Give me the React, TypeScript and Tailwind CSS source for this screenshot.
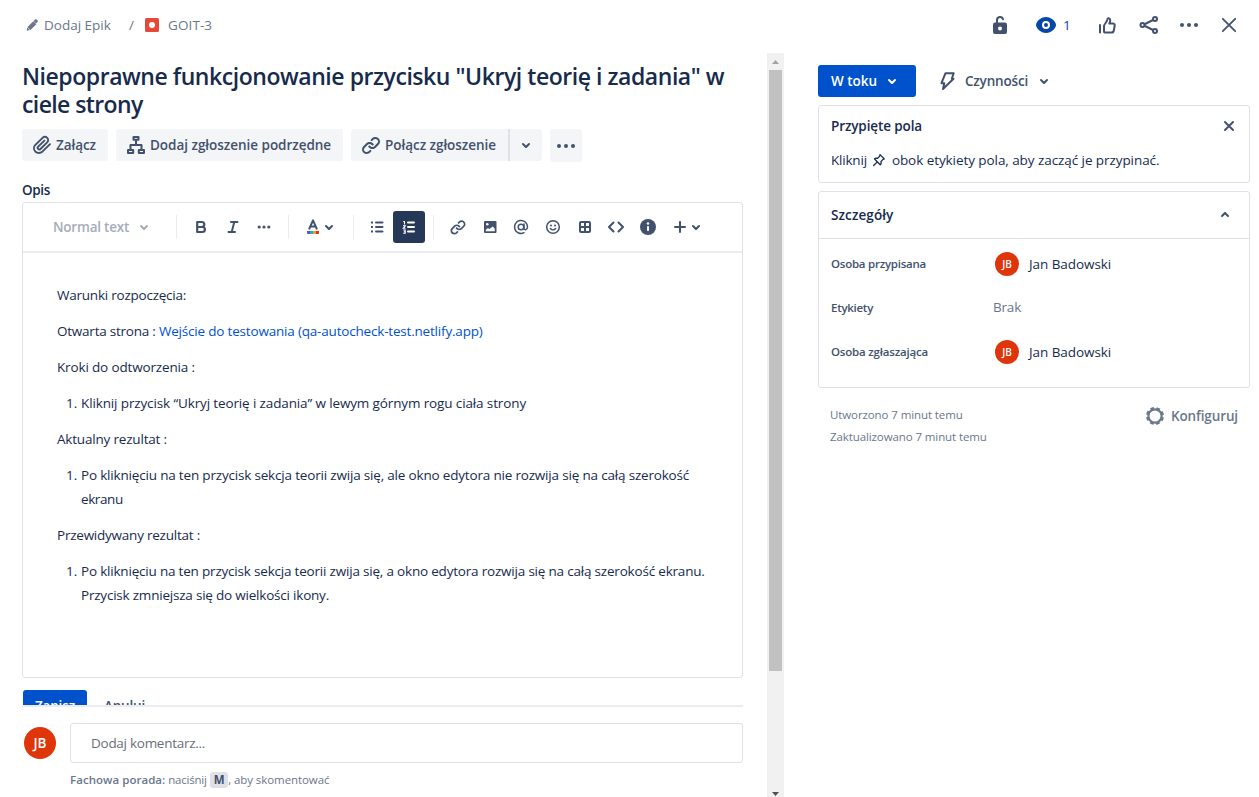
import type { ReactNode } from "react";

function Svg({ children, className = "size-6" }: { children: ReactNode; className?: string }) {
  return (
    <svg viewBox="0 0 24 24" className={`shrink-0 ${className}`} fill="none" stroke="none">
      {children}
    </svg>
  );
}

function Chevron({ className = "size-6" }: { className?: string }) {
  return (
    <Svg className={className}>
      <path
        fill="currentColor"
        d="M8.292 10.293a1.009 1.009 0 000 1.419l2.939 2.965c.218.215.5.322.779.322s.556-.107.769-.322l2.93-2.955a1.01 1.01 0 000-1.419.987.987 0 00-1.406 0l-2.298 2.317-2.307-2.327a.99.99 0 00-1.406 0z"
      />
    </Svg>
  );
}

function LinkIcon({ className }: { className?: string }) {
  return (
    <Svg className={className}>
      <g fill="currentColor">
        <path d="M12.856 5.457l-.937.92a1.002 1.002 0 000 1.437 1.047 1.047 0 001.463 0l.984-.966c.967-.95 2.542-1.135 3.602-.288a2.54 2.54 0 01.203 3.81l-2.903 2.852a2.646 2.646 0 01-3.696 0l-1.11-1.09L9 13.57l1.108 1.089c1.822 1.788 4.802 1.788 6.622 0l2.905-2.852a4.558 4.558 0 00-.357-6.82c-1.893-1.517-4.695-1.226-6.422.47" />
        <path d="M11.144 19.543l.937-.92a1.002 1.002 0 000-1.437 1.047 1.047 0 00-1.462 0l-.985.966c-.967.95-2.542 1.135-3.602.288a2.54 2.54 0 01-.203-3.81l2.903-2.852a2.646 2.646 0 013.696 0l1.11 1.09L15 11.43l-1.108-1.089c-1.822-1.788-4.802-1.788-6.622 0l-2.905 2.852a4.558 4.558 0 00.357 6.82c1.893 1.517 4.695 1.226 6.422-.47" />
      </g>
    </Svg>
  );
}

function AttachIcon() {
  return (
    <Svg>
      <path
        fill="currentColor"
        d="M11.643 17.965c-1.53 1.495-4.016 1.496-5.542.004a3.773 3.773 0 01.002-5.412l7.147-6.985a2.316 2.316 0 013.233-.003c.893.873.895 2.282.004 3.153l-6.703 6.55a.653.653 0 01-.914-.008.62.62 0 010-.902l6.229-6.087a.941.941 0 000-1.353.995.995 0 00-1.384 0l-6.23 6.087a2.502 2.502 0 000 3.607 2.643 2.643 0 003.683.009l6.703-6.55a4.074 4.074 0 00-.003-5.859 4.306 4.306 0 00-6.001.003L4.72 11.204a5.648 5.648 0 00-.002 8.118c2.293 2.24 6.017 2.241 8.308-.001l7.687-7.502a.94.94 0 000-1.353.995.995 0 00-1.384 0z"
      />
    </Svg>
  );
}

function ChildIssueIcon() {
  return (
    <Svg>
      <g stroke="currentColor" strokeWidth="2" strokeLinejoin="round" strokeLinecap="round">
        <rect x="10.500" y="4" width="5" height="2.800" />
        <path d="M13 7.500V12M7.500 16v-4h11v4" />
        <rect x="5" y="17" width="5.200" height="3" />
        <rect x="15.800" y="17" width="5.200" height="3" />
      </g>
    </Svg>
  );
}

function MoreIcon({ className }: { className?: string }) {
  return (
    <Svg className={className}>
      <g fill="currentColor">
        <circle cx="5" cy="12" r="2" />
        <circle cx="12" cy="12" r="2" />
        <circle cx="19" cy="12" r="2" />
      </g>
    </Svg>
  );
}

function Divider({ className }: { className: string }) {
  return <span className={`h-6 w-px shrink-0 bg-[#ebecf0] ${className}`} />;
}

function Avatar({ className }: { className: string }) {
  return (
    <span className={`flex shrink-0 items-center justify-center rounded-full bg-[#de350b] font-semibold text-white ${className}`}>
      JB
    </span>
  );
}

function TopBar() {
  return (
    <header className="flex h-[53px] shrink-0 items-start pl-6 pr-[18px] pt-[13px] text-[#6b778c]">
      <div className="flex h-6 items-center">
        <svg viewBox="0 0 16 16" className="size-4" fill="currentColor">
          <path d="M2.700 13.600l.6-3.100 2.600 2.600-2.900.7c-.2 0-.4-.1-.3-.2zM3.500 10l5.800-5.800 3 3L6.500 13zM9.600 4l1.500-1.500c.5-.5 1.200-.4 1.700 0l.7.7c.5.500.4 1.200 0 1.700L12 6.500z" />
        </svg>
        <span className="ml-1 w-[85px]">Dodaj Epik</span>
        <span className="w-4">/</span>
        <svg viewBox="0 0 14 14" className="size-[14px]">
          <rect width="14" height="14" rx="1.5" fill="#e5493a" />
          <circle cx="7" cy="7" r="3" fill="#fff" />
        </svg>
        <span className="ml-[9px] tracking-[0.1px]">GOIT-3</span>
      </div>
      <div className="ml-auto flex h-6 items-center text-[#42526e]">
        <Svg>
          <path d="M9 10.500V7a3.050 3.050 0 016-.8" stroke="currentColor" strokeWidth="2" strokeLinecap="round" />
          <rect x="5" y="9.500" width="14" height="11.500" rx="2" fill="currentColor" />
          <circle cx="12" cy="15.5" r="2" fill="#fff" />
        </Svg>
        <Svg className="ml-[22px] size-6 text-[#0747a6]">
          <path fill="currentColor" d="M12 4c-5.400 0-10 4.800-10 8s4.600 8 10 8 10-4.800 10-8-4.600-8-10-8z" />
          <circle cx="12" cy="12" r="3" stroke="#fff" strokeWidth="2" />
        </Svg>
        <span className="ml-[5px] w-[9px] text-[#0747a6]">1</span>
        <Svg className="-mt-[2px] ml-[23px] size-6">
          <path
            d="M5 13v7.500M9 19.500V14c0-1.800 3-3.800 3.300-6.300.2-2.200 2.900-1.900 2.900.5 0 1.600-.9 3.300-.9 3.300h3.600c1.300 0 2 .8 1.800 2l-.9 5c-.2 1.300-1 2-2.300 2h-5.700c-1.100 0-1.800-.4-1.800-1z"
            stroke="currentColor"
            strokeWidth="2"
            strokeLinejoin="round"
            strokeLinecap="round"
          />
        </Svg>
        <Svg className="ml-[18px] size-6">
          <path d="M6 12l12-6M6 12l12 6" stroke="currentColor" strokeWidth="2" />
          <g stroke="currentColor" strokeWidth="2" fill="#fff">
            <circle cx="5.500" cy="12" r="2" />
            <circle cx="18" cy="6" r="2" />
            <circle cx="18" cy="18" r="2" />
          </g>
        </Svg>
        <MoreIcon className="ml-4 size-6" />
        <Svg className="ml-4 size-6">
          <path d="M5.800 5.800l12.400 12.400M18.200 5.800l-12.400 12.400" stroke="currentColor" strokeWidth="1.800" strokeLinecap="round" />
        </Svg>
      </div>
    </header>
  );
}

const pill = "flex h-8 items-center rounded-[3px] bg-[#f4f5f7] font-semibold text-[#42526e]";

function ActionBar() {
  return (
    <div className="mt-[11px] flex gap-2">
      <button className={`${pill} w-[86px] pl-2 tracking-[-0.07px]`}>
        <AttachIcon />
        <span className="ml-0.5">Załącz</span>
      </button>
      <button className={`${pill} w-[227px] pl-[7px] tracking-[-0.03px]`}>
        <ChildIssueIcon />
        <span className="ml-[3px]">Dodaj zgłoszenie podrzędne</span>
      </button>
      <div className="flex">
        <button className={`${pill} w-[157px] rounded-r-none pl-2 tracking-[-0.04px]`}>
          <LinkIcon />
          <span className="ml-0.5">Połącz zgłoszenie</span>
        </button>
        <span className="h-8 w-[2px] bg-[#dfe1e6]" />
        <button className={`${pill} w-8 justify-center rounded-l-none`}>
          <Chevron />
        </button>
      </div>
      <button className={`${pill} h-[33px] w-8 justify-center`}>
        <MoreIcon />
      </button>
    </div>
  );
}

function Toolbar() {
  return (
    <div className="flex h-[50px] shrink-0 items-center border-b-2 border-[#ebecf0] text-[#42526e]">
      <span className="ml-[30px] w-[79px] font-semibold tracking-[-0.22px] text-[#a5adba]">Normal text</span>
      <Chevron className="size-6 text-[#a5adba]" />
      <Divider className="ml-5" />
      <Svg className="ml-3 size-6">
        <path
          d="M8.200 7h4.600a2.500 2.500 0 010 5H8.200zM8.200 12h5.200a2.500 2.500 0 010 5H8.200z"
          stroke="currentColor"
          strokeWidth="2.200"
          strokeLinejoin="round"
        />
      </Svg>
      <Svg className="ml-2 size-6">
        <path d="M10 7h6.500M7.500 17H14M13.300 7l-2.600 10" stroke="currentColor" strokeWidth="2" strokeLinecap="round" />
      </Svg>
      <Svg className="ml-[7px] size-6">
        <g fill="currentColor">
          <circle cx="7.200" cy="12" r="1.600" />
          <circle cx="12" cy="12" r="1.600" />
          <circle cx="16.800" cy="12" r="1.600" />
        </g>
      </Svg>
      <Divider className="ml-3" />
      <Svg className="ml-3 size-6">
        <path d="M8 14.300l4-9 4 9M9.500 11.500h5" stroke="currentColor" strokeWidth="2" strokeLinejoin="round" />
        <path d="M6 16h3v3H7a1 1 0 01-1-1z" fill="#6554c0" />
        <path d="M9 16h3v3H9z" fill="#00b8d9" />
        <path d="M12 16h3v3h-3z" fill="#ff991f" />
        <path d="M15 16h3v2a1 1 0 01-1 1h-2z" fill="#de350b" />
      </Svg>
      <Chevron className="-ml-2 size-6" />
      <Divider className="ml-3" />
      <Svg className="ml-[11px] size-6">
        <path d="M11 7.500h6.500M11 12h6.500M11 16.500h6.500" stroke="currentColor" strokeWidth="2" strokeLinecap="round" />
        <path d="M6 7.500h2M6 12h2M6 16.500h2" stroke="currentColor" strokeWidth="2" />
      </Svg>
      <span className="ml-1 flex size-8 items-center justify-center rounded-[3px] bg-[#253858] text-white">
        <Svg>
          <path d="M11 7.500h6M11 12h6M11 16.500h6" stroke="currentColor" strokeWidth="2" strokeLinecap="round" />
          <path
            d="M6.200 6.500h1.300v3M6 10.800h2.300L6.300 13.300h2.200M6.200 15h2v3.300H6.200M6.800 16.700h1.400"
            stroke="currentColor"
            strokeWidth="1.100"
          />
        </Svg>
      </span>
      <Divider className="ml-2" />
      <LinkIcon className="ml-3 size-6 p-[2px]" />
      <Svg className="ml-2 size-6">
        <rect x="6" y="6" width="12.500" height="12" rx="1" fill="currentColor" />
        <circle cx="9.300" cy="9.300" r="1.300" fill="#fff" />
        <path d="M7.800 16.300v-1.600l2-1.600 1.700 1 3.200-2.700 2 2v2.900z" fill="#fff" />
      </Svg>
      <Svg className="ml-[7px] size-6">
        <g stroke="currentColor" strokeWidth="1.500" strokeLinecap="round">
          <circle cx="12" cy="12" r="2.800" />
          <path d="M15 9v4.300c0 2.200 3.500 2 3.500-1.300a6.500 6.500 0 10-3.500 5.700" />
        </g>
      </Svg>
      <Svg className="ml-2 size-6">
        <circle cx="12" cy="12" r="6.300" stroke="currentColor" strokeWidth="1.500" />
        <circle cx="10" cy="10.500" r="1" fill="currentColor" />
        <circle cx="14" cy="10.500" r="1" fill="currentColor" />
        <path d="M9.300 13.400c1.200 2 4.200 2 5.400 0" stroke="currentColor" strokeWidth="1.400" strokeLinecap="round" />
      </Svg>
      <Svg className="ml-2 size-6">
        <rect x="7" y="7" width="10" height="10" rx="1" stroke="currentColor" strokeWidth="2" />
        <path d="M12 7v10M7 12h10" stroke="currentColor" strokeWidth="2" />
      </Svg>
      <Svg className="ml-[7px] size-6">
        <path
          d="M9.500 7.500L5 12l4.500 4.500M14.500 7.500L19 12l-4.500 4.500"
          stroke="currentColor"
          strokeWidth="2"
          strokeLinecap="round"
          strokeLinejoin="round"
        />
      </Svg>
      <Svg className="ml-2 size-6">
        <circle cx="12" cy="12" r="8" fill="currentColor" />
        <rect x="11" y="11" width="2" height="5" rx="0.800" fill="#fff" />
        <circle cx="12" cy="8.500" r="1.200" fill="#fff" />
      </Svg>
      <Svg className="ml-2 size-6">
        <path d="M12 7v10M7 12h10" stroke="currentColor" strokeWidth="2" strokeLinecap="round" />
      </Svg>
      <Chevron className="-ml-2 size-6" />
    </div>
  );
}

function Numbered({ children }: { children: ReactNode }) {
  return (
    <ol className="mb-3 flex leading-6">
      <li className="w-6 pr-1 text-right">1.</li>
      <li>{children}</li>
    </ol>
  );
}

function Editor() {
  return (
    <div className="mt-[2px] flex h-[476px] w-[721px] shrink-0 flex-col rounded-[3px] border border-[#dfe1e6]">
      <Toolbar />
      <div className="whitespace-nowrap pl-[34px] pt-[30px] tracking-[-0.19px]">
        <p className="mb-3 leading-6 tracking-[-0.23px]">Warunki rozpoczęcia:</p>
        <p className="mb-3 leading-6">
          <span className="tracking-[-0.23px]">Otwarta strona : </span>
          <a className="text-[#0052cc]">Wejście do testowania (qa-autocheck-test.netlify.app)</a>
        </p>
        <p className="mb-3 leading-6 tracking-[-0.15px]">Kroki do odtworzenia :</p>
        <Numbered>
          <span className="tracking-[-0.128px]">
            Kliknij przycisk “Ukryj teorię i zadania” w lewym górnym rogu ciała strony
          </span>
        </Numbered>
        <p className="mb-3 leading-6">Aktualny rezultat :</p>
        <Numbered>
          <span className="tracking-[-0.182px]">
            Po kliknięciu na ten przycisk sekcja teorii zwija się, ale okno edytora nie rozwija się na całą szerokość
          </span>
          <br />
          <span className="tracking-[-0.4px]">ekranu</span>
        </Numbered>
        <p className="mb-3 leading-6 tracking-[-0.23px]">Przewidywany rezultat :</p>
        <Numbered>
          <span className="tracking-[-0.197px]">
            Po kliknięciu na ten przycisk sekcja teorii zwija się, a okno edytora rozwija się na całą szerokość ekranu.
          </span>
          <br />
          <span className="tracking-[-0.21px]">Przycisk zmniejsza się do wielkości ikony.</span>
        </Numbered>
      </div>
    </div>
  );
}

function CommentBox() {
  return (
    <div className="mr-6 flex border-t-2 border-[#ebecf0] pt-4">
      <Avatar className="ml-[2px] mt-1 size-8 text-[13.5px]" />
      <div className="ml-[14px] flex-1">
        <div className="flex h-10 items-center rounded-[3px] border border-[#dfe1e6] pl-5 tracking-[-0.27px] text-[#6b6e76]">
          Dodaj komentarz...
        </div>
        <div className="mt-2 flex h-[18px] items-center whitespace-pre text-[11.5px] text-[#6b778c]">
          <b className="font-semibold tracking-[0.04px]">Fachowa porada:</b>
          <span className="ml-[3px] tracking-[-0.22px]">naciśnij</span>
          <kbd className="ml-[3.5px] mr-px flex h-4 w-[18px] items-center justify-center rounded-[3px] bg-[#dfe1e6] font-['Open_Sans'] font-bold text-[#42526e]">
            M
          </kbd>
          <span className="-ml-px tracking-[-0.08px]">, aby skomentować</span>
        </div>
      </div>
    </div>
  );
}

function Scrollbar() {
  return (
    <div className="flex w-[17px] shrink-0 flex-col items-center bg-[#f1f1f1]">
      <svg viewBox="0 0 17 17" className="size-[17px]">
        <path d="M5 11h7L8.500 7z" fill="#a3a3a3" />
      </svg>
      <div className="h-[601px] w-[13px] bg-[#c1c1c1]" />
      <svg viewBox="0 0 17 12" className="mt-auto h-3 w-[17px]">
        <path d="M5 7h7L8.500 11z" fill="#505050" />
      </svg>
    </div>
  );
}

function Field({ label, track, children }: { label: string; track: string; children: ReactNode }) {
  return (
    <div className="flex h-11 items-center">
      <span className={`w-[163px] text-[11.5px] font-semibold text-[#42526e] ${track}`}>{label}</span>
      {children}
    </div>
  );
}

function Person() {
  return (
    <span className="flex items-center pl-px text-[#172b4d]">
      <Avatar className="size-6 text-[10px]" />
      <span className="ml-2.5 tracking-[-0.06px]">Jan Badowski</span>
    </span>
  );
}

function Details() {
  return (
    <aside className="ml-[34px] w-[432px] shrink-0 pt-3">
      <div className="flex items-center font-semibold">
        <button className="flex h-8 w-[98px] items-center rounded-[3px] bg-[#0052cc] pl-3 text-white">
          <span className="-ml-[2px] w-[52px]">W toku</span>
          <Chevron />
        </button>
        <button className="ml-[19px] flex items-center text-[#42526e]">
          <Svg>
            <path
              d="M10.500 4.200h8.200l-1.900 5.600h1.700L8 20l1.300-5.800H6.500z"
              stroke="currentColor"
              strokeWidth="2"
              strokeLinejoin="round"
            />
          </Svg>
          <span className="ml-[2px] w-[71px] tracking-[-0.18px]">Czynności</span>
          <Chevron />
        </button>
      </div>

      <section className="mt-2 h-[78px] rounded-[3px] border border-[#dfe1e6] px-3 pt-2 text-[#172b4d]">
        <div className="flex h-6 items-center justify-between">
          <h2 className="font-semibold tracking-[-0.11px]">Przypięte pola</h2>
          <Svg className="-mr-1 size-6 text-[#42526e]">
            <path d="M8 8l8 8M16 8l-8 8" stroke="currentColor" strokeWidth="2" strokeLinecap="round" />
          </Svg>
        </div>
        <p className="mt-2.5 flex h-6 items-center">
          <span className="tracking-[-0.2px]">Kliknij</span>
          <Svg className="ml-1 size-4">
            <path
              d="M13.500 4l6.500 6.500-2 .5-3 3.200.2 3.500-1.400 1.400-8.500-8.500 1.400-1.400 3.300.2 3-3.200zM9.500 14.800L4 20.300"
              stroke="currentColor"
              strokeWidth="1.900"
              strokeLinejoin="round"
              strokeLinecap="round"
            />
          </Svg>
          <span className="ml-[5px] tracking-[-0.07px]">obok etykiety pola, aby zacząć je przypinać.</span>
        </p>
      </section>

      <section className="mt-2 h-[197px] rounded-[3px] border border-[#dfe1e6]">
        <div className="flex h-[47px] items-center justify-between border-b border-[#dfe1e6] pl-3 pr-3 text-[#172b4d]">
          <h2 className="font-semibold tracking-[0.1px]">Szczegóły</h2>
          <Chevron className="size-6 rotate-180 text-[#42526e]" />
        </div>
        <div className="pl-3 pt-[3px]">
          <Field label="Osoba przypisana" track="tracking-[-0.24px]">
            <Person />
          </Field>
          <Field label="Etykiety" track="tracking-[-0.28px]">
            <span className="-mt-[2px] -ml-px tracking-[-0.2px] text-[#6b778c]">Brak</span>
          </Field>
          <Field label="Osoba zgłaszająca" track="tracking-[-0.2px]">
            <Person />
          </Field>
        </div>
      </section>

      <div className="mt-4 flex justify-between pl-3 pr-3 text-[#6b778c]">
        <div className="text-[11.5px] leading-[22px] tracking-[-0.1px]">
          <p>Utworzono 7 minut temu</p>
          <p>Zaktualizowano 7 minut temu</p>
        </div>
        <div className="flex h-6 items-center font-semibold tracking-[-0.12px]">
          <Svg>
            <circle cx="12" cy="12" r="6.600" stroke="currentColor" strokeWidth="2.200" />
            <circle
              cx="12"
              cy="12"
              r="7.800"
              stroke="currentColor"
              strokeWidth="2.400"
              strokeDasharray="3.600 2.526"
              strokeDashoffset="4.863"
            />
          </Svg>
          <span className="ml-1">Konfiguruj</span>
        </div>
      </div>
    </aside>
  );
}

export default function App() {
  return (
    <div className="flex h-[797px] w-[1259px] flex-col overflow-hidden whitespace-nowrap bg-white font-['Open_Sans',sans-serif] text-[13.5px] leading-5 text-[#172b4d]">
      <TopBar />
      <div className="flex min-h-0 flex-1">
        <main className="flex w-[767px] shrink-0 flex-col pl-[22px]">
          <div className="flex h-[652px] shrink-0 flex-col overflow-hidden">
            <h1 className="pt-[9px] text-[23px] font-semibold leading-7 tracking-[-0.45px]">
              Niepoprawne funkcjonowanie przycisku "Ukryj teorię i zadania" w
              <br />
              <span className="tracking-[-0.6px]">ciele strony</span>
            </h1>
            <ActionBar />
            <h2 className="mt-[18px] font-semibold tracking-[-0.33px]">Opis</h2>
            <Editor />
            <div className="mt-3 flex shrink-0 items-center font-semibold">
              <button className="ml-px flex h-8 w-16 items-center justify-center rounded-[3px] bg-[#0052cc] tracking-[-0.1px] text-white">
                Zapisz
              </button>
              <button className="ml-[17px] tracking-[-0.2px] text-[#42526e]">Anuluj</button>
            </div>
          </div>
          <CommentBox />
        </main>
        <Scrollbar />
        <Details />
      </div>
    </div>
  );
}
